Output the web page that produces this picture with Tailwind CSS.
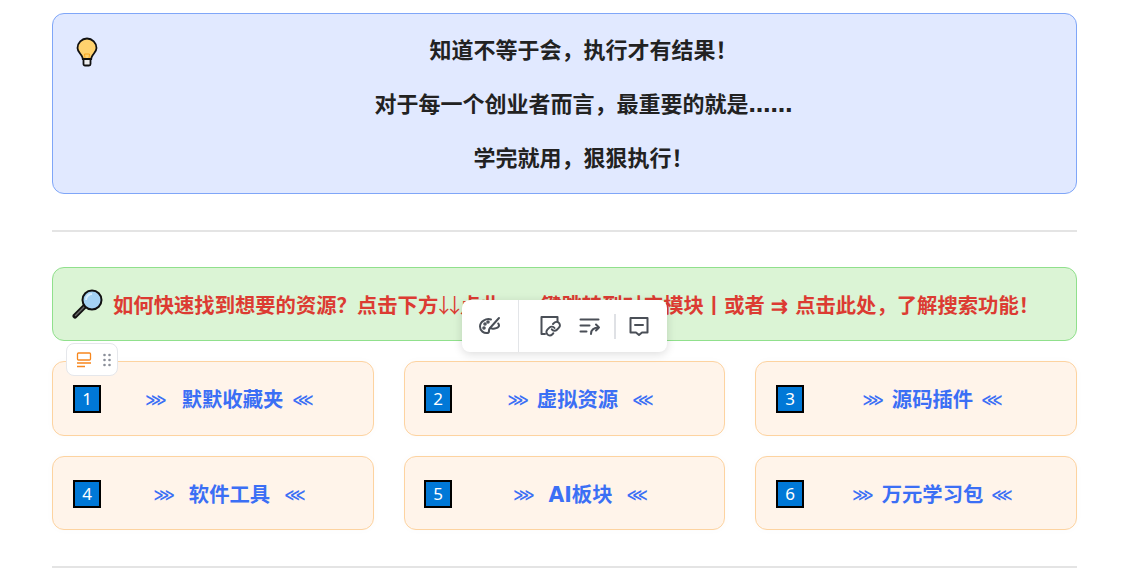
<!DOCTYPE html>
<html lang="zh-CN">
<head>
  <meta charset="UTF-8">
  <title>资源导航</title>
  <script src="https://cdn.jsdelivr.net/npm/@tailwindcss/browser@4"></script>
</head>
<body class="bg-white overflow-hidden font-['Liberation_Sans','Noto_Sans_CJK_SC',sans-serif]">
  <div class="relative w-[1136px] h-[586px] pl-[52px] pr-[59px] pt-[13px]">

    <!-- tip callout -->
    <div class="flex h-[181px] rounded-xl border border-[#7fa6f8] bg-[#e1e9ff] pl-[23px] pr-[7px]">
      <svg class="w-[22px] h-[30px] mt-[23px] shrink-0" viewBox="0 0 22 30">
        <path d="M11 1.500a9.500 9.500 0 0 0-9.500 9.500c0 3.400 2.500 5.200 4 7.400.8 1.200 1.200 2.400 1.300 3.600h8.400c.1-1.200.5-2.400 1.300-3.600 1.500-2.200 4-4 4-7.400A9.500 9.500 0 0 0 11 1.500z" fill="#ffd26e" stroke="#111" stroke-width="1.800"/>
        <path d="M7.500 22h7v5a1.500 1.500 0 0 1-1.500 1.500H9A1.500 1.500 0 0 1 7.500 27z" fill="#eee" stroke="#111" stroke-width="1.800"/>
        <path d="M9 21l-.5-4M13 21l.5-4M8.500 17h5" stroke="#f5a623" stroke-width="1" fill="none"/>
      </svg>
      <div class="flex-1 flex flex-col items-center pt-[21px] gap-[22px] text-[22px] leading-[32px] font-bold text-[#222]">
        <p>知道不等于会，执行才有结果！</p>
        <p>对于每一个创业者而言，最重要的就是<span class="font-['DejaVu_Sans']">……</span></p>
        <p>学完就用，狠狠执行！</p>
      </div>
    </div>

    <hr class="mt-[36px] border-0 h-[2px] bg-[#e4e4e4]">

    <!-- search tip -->
    <div class="mt-[35px] flex items-center h-[74px] rounded-xl border border-[#90e08c] bg-[#dbf4d5] pl-[19px]">
      <svg class="w-[32px] h-[32px] shrink-0" viewBox="0 0 32 32">
        <path d="M3 28l10-10" stroke="#111" stroke-width="5" stroke-linecap="round"/>
        <path d="M3.500 27.500l9-9" stroke="#666" stroke-width="1.500" stroke-linecap="round"/>
        <circle cx="20" cy="12" r="9.500" fill="#a4d2f4" stroke="#111" stroke-width="2"/>
        <path d="M14 12a6 6 0 0 1 6-6" stroke="#d8eefc" stroke-width="2" fill="none"/>
      </svg>
      <p class="ml-[9px] pt-[2px] text-[20.33px] font-bold text-[#dc3b32] whitespace-nowrap">如何快速找到想要的资源？点击下方<span class="ml-[-4.5px] mr-[4.5px] tracking-[-9.5px] font-['Noto_Sans_CJK_SC'] font-normal">↓↓</span>点此，一键跳转到对应模块丨或者 <span class="mx-[1px]">⇉</span> 点击此处，了解搜索功能！</p>
    </div>

    <!-- module cards -->
    <div class="mt-[20px] grid grid-cols-[322px_321px_322px] gap-x-[30px] gap-y-[20px]">
      <a class="flex items-center h-[75px] rounded-xl border border-[#fdd3a0] bg-[#fff4ea] shadow-[0_0_10px_rgba(0,0,0,0.02)] pl-[20px]">
        <span class="flex items-center justify-center w-[28px] h-[28px] border-2 border-black bg-[#0078d7] text-white text-[17px] font-['Noto_Sans'] shrink-0">1</span>
        <span class="flex-1 flex justify-center items-center pt-[4px] pr-[15px] text-[20.33px] font-bold text-[#3b6ff5]"><span class="font-['DejaVu_Sans'] text-[15px]">⋙</span><span class="ml-[15px] mr-[9px]">默默收藏夹</span><span class="font-['DejaVu_Sans'] text-[15px]">⋘</span></span>
      </a>
      <a class="flex items-center h-[75px] rounded-xl border border-[#fdd3a0] bg-[#fff4ea] shadow-[0_0_10px_rgba(0,0,0,0.02)] pl-[19px]">
        <span class="flex items-center justify-center w-[28px] h-[28px] border-2 border-black bg-[#0078d7] text-white text-[17px] font-['Noto_Sans'] shrink-0">2</span>
        <span class="flex-1 flex justify-center items-center pt-[4px] pr-[15px] text-[20.33px] font-bold text-[#3b6ff5]"><span class="font-['DejaVu_Sans'] text-[15px]">⋙</span><span class="ml-[8px] mr-[14px]">虚拟资源</span><span class="font-['DejaVu_Sans'] text-[15px]">⋘</span></span>
      </a>
      <a class="flex items-center h-[75px] rounded-xl border border-[#fdd3a0] bg-[#fff4ea] shadow-[0_0_10px_rgba(0,0,0,0.02)] pl-[20px]">
        <span class="flex items-center justify-center w-[28px] h-[28px] border-2 border-black bg-[#0078d7] text-white text-[17px] font-['Noto_Sans'] shrink-0">3</span>
        <span class="flex-1 flex justify-center items-center pt-[4px] pr-[15px] text-[20.33px] font-bold text-[#3b6ff5]"><span class="font-['DejaVu_Sans'] text-[15px]">⋙</span><span class="ml-[8px] mr-[8px]">源码插件</span><span class="font-['DejaVu_Sans'] text-[15px]">⋘</span></span>
      </a>
      <a class="flex items-center h-[74px] rounded-xl border border-[#fdd3a0] bg-[#fff4ea] shadow-[0_0_10px_rgba(0,0,0,0.02)] pl-[20px]">
        <span class="flex items-center justify-center w-[28px] h-[28px] mt-[1px] border-2 border-black bg-[#0078d7] text-white text-[17px] font-['Noto_Sans'] shrink-0">4</span>
        <span class="flex-1 flex justify-center items-center pt-[4px] pr-[15px] text-[20.33px] font-bold text-[#3b6ff5]"><span class="font-['DejaVu_Sans'] text-[15px]">⋙</span><span class="mx-[14px]">软件工具</span><span class="font-['DejaVu_Sans'] text-[15px]">⋘</span></span>
      </a>
      <a class="flex items-center h-[74px] rounded-xl border border-[#fdd3a0] bg-[#fff4ea] shadow-[0_0_10px_rgba(0,0,0,0.02)] pl-[19px]">
        <span class="flex items-center justify-center w-[28px] h-[28px] mt-[1px] border-2 border-black bg-[#0078d7] text-white text-[17px] font-['Noto_Sans'] shrink-0">5</span>
        <span class="flex-1 flex justify-center items-center pt-[4px] pr-[15px] text-[20.33px] font-bold text-[#3b6ff5]"><span class="font-['DejaVu_Sans'] text-[15px]">⋙</span><span class="mx-[14px]"><span class="font-['DejaVu_Sans']">AI</span>板块</span><span class="font-['DejaVu_Sans'] text-[15px]">⋘</span></span>
      </a>
      <a class="flex items-center h-[74px] rounded-xl border border-[#fdd3a0] bg-[#fff4ea] shadow-[0_0_10px_rgba(0,0,0,0.02)] pl-[20px]">
        <span class="flex items-center justify-center w-[28px] h-[28px] mt-[1px] border-2 border-black bg-[#0078d7] text-white text-[17px] font-['Noto_Sans'] shrink-0">6</span>
        <span class="flex-1 flex justify-center items-center pt-[4px] pr-[15px] text-[20.33px] font-bold text-[#3b6ff5]"><span class="font-['DejaVu_Sans'] text-[15px]">⋙</span><span class="mx-[8px]">万元学习包</span><span class="font-['DejaVu_Sans'] text-[15px]">⋘</span></span>
      </a>
    </div>

    <hr class="mt-[36px] border-0 h-[2px] bg-[#e4e4e4]">

    <!-- block handle -->
    <div class="absolute left-[66px] top-[343px] flex items-center gap-[11px] w-[52px] h-[33px] pl-[9px] rounded-lg border border-[#e5e7eb] bg-white">
      <svg class="w-[16px] h-[16px]" viewBox="0 0 16 16" fill="none" stroke="#f7871e" stroke-width="1.300">
        <rect x="1.500" y="1" width="13" height="7" rx="1"/>
        <path d="M1 11h14M1 14.500h8"/>
      </svg>
      <svg class="w-[8px] h-[14px]" viewBox="0 0 8 14" fill="#8a8f99">
        <circle cx="1.500" cy="2" r="1.300"/><circle cx="6.500" cy="2" r="1.300"/>
        <circle cx="1.500" cy="7" r="1.300"/><circle cx="6.500" cy="7" r="1.300"/>
        <circle cx="1.500" cy="12" r="1.300"/><circle cx="6.500" cy="12" r="1.300"/>
      </svg>
    </div>

    <!-- floating toolbar -->
    <div class="absolute left-[462px] top-[300px] flex items-center w-[205px] h-[52px] rounded-lg bg-white shadow-[0_2px_10px_rgba(0,0,0,0.14)] text-[#4a4f57]">
      <div class="flex items-center justify-center w-[57px] h-full border-r border-[#e3e5e8]">
        <svg class="w-[24px] h-[24px]" viewBox="0 0 24 24" fill="none" stroke="currentColor" stroke-width="2" stroke-linecap="round" stroke-linejoin="round">
          <path d="M13 5.500C8 4 2 7.500 2 12.500c0 4.500 4 7 7.500 6.500 2-.3 1.500-2 1.500-3 0-1.500 1.500-2 3-1.500 2 .5 7-.5 7-3 0-.8-.3-1.500-.8-2"/>
          <path d="M12 14l9-10"/>
          <circle cx="7" cy="10" r=".8"/><circle cx="6" cy="14" r=".8"/><circle cx="10" cy="8" r=".8"/>
        </svg>
      </div>
      <svg class="ml-[19px] w-[24px] h-[24px]" viewBox="0 0 24 24" fill="none" stroke="currentColor" stroke-width="2" stroke-linecap="round" stroke-linejoin="round">
        <path d="M7 20H3.500V3h16v5"/>
        <g transform="translate(7 6.500) scale(.68)" stroke-width="2.900">
          <path d="M10 13a5 5 0 0 0 7.540.540l3-3a5 5 0 0 0-7.070-7.070l-1.720 1.710"/>
          <path d="M14 11a5 5 0 0 0-7.540-.540l-3 3a5 5 0 0 0 7.070 7.070l1.710-1.710"/>
        </g>
      </svg>
      <svg class="ml-[16px] w-[24px] h-[24px]" viewBox="0 0 24 24" fill="none" stroke="currentColor" stroke-width="2" stroke-linecap="round" stroke-linejoin="round">
        <path d="M2.500 5.500h18M2.500 11.500h9M2.500 17.500h6"/>
        <path d="M13 20c0-4 2.500-6.500 8-6.500M18 10.500l3 3-3 3"/>
      </svg>
      <div class="ml-[12px] w-[2px] h-[25px] bg-[#dfe1e5]"></div>
      <svg class="ml-[11px] w-[24px] h-[24px]" viewBox="0 0 24 24" fill="none" stroke="currentColor" stroke-width="2" stroke-linecap="round" stroke-linejoin="round">
        <path d="M3.500 4h17v14.500H15L12 21l-3-2.500H3.500z"/>
        <path d="M8 11h8"/>
      </svg>
    </div>
  </div>
</body>
</html>
